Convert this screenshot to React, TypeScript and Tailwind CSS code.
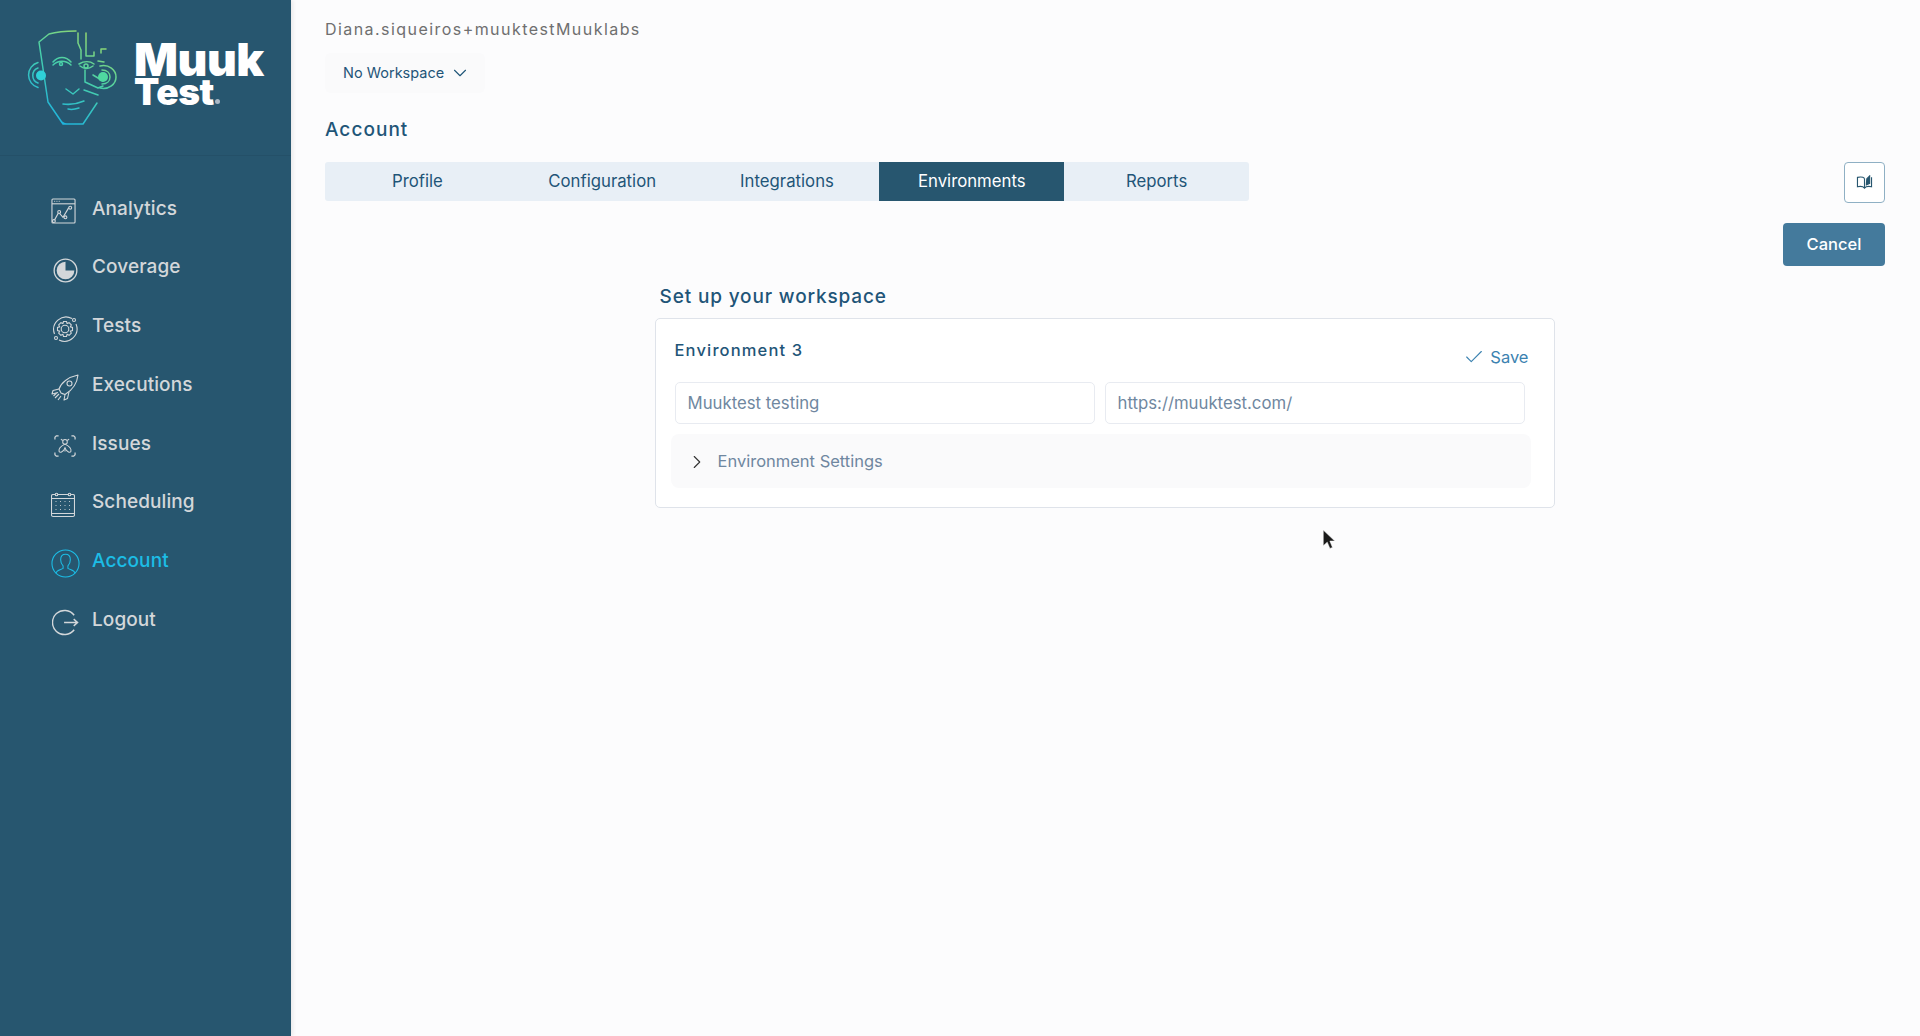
import { Check, ChevronDown, ChevronRight } from "lucide-react";
import type { ReactNode } from "react";

const AnalyticsIcon = () => (
  <svg viewBox="0 0 26 28" className="w-[25px] h-[27px]" fill="none" stroke="currentColor" strokeWidth="1.150">
    <rect x="1" y="1" width="24" height="25" rx="1" />
    <path d="M1 6h24" />
    <path d="M3.5 3.5h.8M5.8 3.5h.8M8.1 3.5h.8" />
    <path d="M3 24l5-9 4.5 5 6-10" />
    <circle cx="3" cy="24" r="1.5" fill="#27566f" />
    <circle cx="8.5" cy="14.5" r="1.5" fill="#27566f" />
    <circle cx="15" cy="20" r="1.5" fill="#27566f" />
    <circle cx="20" cy="10" r="1.5" fill="#27566f" />
  </svg>
);

const CoverageIcon = () => (
  <svg viewBox="0 0 26 26" className="w-[25px] h-[25px] ml-[2px]">
    <circle cx="13" cy="13" r="11.8" fill="none" stroke="currentColor" strokeWidth="1.4" />
    <path d="M13 3.8A9.2 9.2 0 1 0 22.2 13H13z" fill="currentColor" />
    <path d="M15 3.9A9 9 0 0 1 22 11h-7z" fill="#27566f" />
  </svg>
);

const TestsIcon = () => (
  <svg viewBox="0 0 28 28" className="w-[28px] h-[28px]" fill="none" stroke="currentColor" strokeWidth="1.100">
    <path d="M3.5 19A12.5 12.5 0 0 1 21 3.5" />
    <path d="M25 9A12.5 12.5 0 0 1 8 25" />
    <circle cx="23" cy="5" r="1.5" />
    <circle cx="5" cy="23" r="1.5" />
    <circle cx="14" cy="14" r="3.8" />
    <path d="M12.5 6.5h3l.6 2.1 2-.9 2.2 2.2-1 2 2.2.6v3l-2.2.6 1 2-2.2 2.2-2-1-.6 2.2h-3l-.6-2.2-2 1-2.2-2.2 1-2-2.2-.6v-3l2.2-.6-1-2 2.2-2.2 2 .9z" />
  </svg>
);

const ExecutionsIcon = () => (
  <svg viewBox="0 0 28 28" className="w-[28px] h-[28px]" fill="none" stroke="currentColor" strokeWidth="1.100" strokeLinejoin="round">
    <path d="M10 19c-1-2-1.500-3-2-4C10 9 17 3 27 1c-1 9-7 16-13 19.500-1.500-.5-3-1-4-1.500z" />
    <circle cx="18.500" cy="9.500" r="2.500" />
    <path d="M8 15l-6 1.500L1 20l6-1.500" />
    <path d="M14 20.500L13 26l3.500-1.500 1.500-6.500" />
    <path d="M8 20l-4 4M10 22l-3 4M5.500 19l-3 3" />
  </svg>
);

const IssuesIcon = () => (
  <svg viewBox="0 0 24 24" className="w-[22px] h-[22px] ml-[3px]" fill="none" stroke="currentColor" strokeWidth="1.100">
    <path d="M1 5V2.500L2.500 1H5M19 1h2.500L23 2.500V5M23 19v2.500L21.500 23H19M5 23H2.500L1 21.500V19" strokeWidth="1.300" />
    <circle cx="12" cy="7.500" r="2.500" />
    <path d="M9.500 6L7.500 4.500M14.500 6l2-1.500" />
    <path d="M12 10c-4 2-7 5-6.500 7.500S10 19 12 14c2 5 6 6 6.500 3.500S16 12 12 10z" />
    <path d="M12 14v4" />
  </svg>
);

const SchedulingIcon = () => {
  const dots = [9.5, 13.5, 17.5].flatMap((y) => [5, 9.500, 14, 18.500].map((x) => ({ x, y })));
  return (
    <svg viewBox="0 0 24 26" className="w-[24px] h-[26px]" fill="none" stroke="currentColor" strokeWidth="1.100">
      <rect x="0.500" y="2.500" width="23" height="22" rx="1.500" />
      <path d="M0.500 6.500h23M0.500 21.500h23" />
      <circle cx="5.500" cy="2.500" r="1.300" fill="#27566f" />
      <circle cx="18.500" cy="2.500" r="1.300" fill="#27566f" />
      {dots.map((d) => (
        <circle key={`${d.x}-${d.y}`} cx={d.x} cy={d.y} r="0.550" fill="currentColor" stroke="none" />
      ))}
    </svg>
  );
};

const AccountIcon = () => (
  <svg viewBox="0 0 30 30" className="w-[29px] h-[29px]" fill="none" stroke="currentColor" strokeWidth="1.100">
    <circle cx="15" cy="15" r="14" />
    <path d="M5 25c1-3.500 5-3.500 7.500-5v-2.500c-1.500-1.500-2.500-4-2.500-6.500 0-3.500 2-5.500 5-5.500s5 2 5 5.500c0 2.500-1 5-2.500 6.500V20c2.500 1.500 6.500 1.500 7.500 5" />
  </svg>
);

const LogoutIcon = () => (
  <svg viewBox="0 0 28 28" className="w-[27px] h-[27px] ml-[1px]" fill="none" stroke="currentColor" strokeWidth="1.500">
    <path d="M23 6.500A12.500 12.500 0 1 0 23 21.500" />
    <path d="M12.500 14h14M22.500 10.500L26.500 14l-4 3.500" />
  </svg>
);

const FaceLogo = () => (
  <svg viewBox="24 28 96 100" className="w-[96px] h-[100px]" fill="none" strokeWidth="1.500">
    <defs>
      <linearGradient id="face" gradientUnits="userSpaceOnUse" x1="100" y1="36" x2="50" y2="118">
        <stop offset="0" stopColor="#9ad86a" />
        <stop offset="0.450" stopColor="#49d0a8" />
        <stop offset="1" stopColor="#1fb4dd" />
      </linearGradient>
    </defs>
    <g stroke="url(#face)" strokeLinecap="round" strokeLinejoin="round">
      <path d="M75 31c-12 0-20 1-27 3l-10 8 9 60 15 22h20l14-21" />
      <path d="M77 33v10l3 7v9" />
      <path d="M85 33v23h8v-4" />
      <path d="M100 53v-4h5M97 61l6 1" />
      <path d="M52 62c5-6 13-6 18 0M52 65c5-5 13-5 18 0" />
      <path d="M78 64c5-3 11-3 15 0M79 66c4 3 9 3 13 0" />
      <circle cx="60" cy="64" r="1.500" />
      <circle cx="85" cy="66" r="2" />
      <path d="M84 70v12l13 6 5-2M92 75l10 6" />
      <path d="M83 90l14 5" />
      <path d="M65 89l7 5 6-5" />
      <path d="M62 104c7 1 14 0 21-3M67 109c4 1 8 0 11-1" />
      <path d="M37 62.500a13 13 0 0 0 0 25" />
      <path d="M37 68a8 8 0 0 0 0 15" />
      <path d="M99 66c9-2 16 4 16 11s-7 13-16 11" />
      <path d="M101 70c5 0 8 3 8 7s-3 7-8 7" />
    </g>
    <circle cx="40" cy="75.500" r="5" fill="#2fd0d8" />
    <circle cx="102" cy="77" r="5" fill="#4fd8a0" />
    <path d="M60 121l6 3h-4z" fill="#1fb4dd" />
  </svg>
);

const navItems: { label: string; icon: ReactNode; active?: boolean }[] = [
  { label: "Analytics", icon: <AnalyticsIcon /> },
  { label: "Coverage", icon: <CoverageIcon /> },
  { label: "Tests", icon: <TestsIcon /> },
  { label: "Executions", icon: <ExecutionsIcon /> },
  { label: "Issues", icon: <IssuesIcon /> },
  { label: "Scheduling", icon: <SchedulingIcon /> },
  { label: "Account", icon: <AccountIcon />, active: true },
  { label: "Logout", icon: <LogoutIcon /> },
];

const tabs = ["Profile", "Configuration", "Integrations", "Environments", "Reports"];

const Sidebar = () => (
  <aside className="w-[291px] shrink-0 bg-[#27566f] shadow-[2px_0_4px_rgba(0,0,0,0.08)]">
    <div className="h-[156px] flex items-start pl-[25px] pt-[28px] border-b border-[#245068]">
      <FaceLogo />
      <div className="ml-[13px] mt-[13px] text-white font-black font-['Inter',sans-serif] leading-none">
        <div className="text-[46px] tracking-[-0.01em] leading-[36px]">Muuk</div>
        <div className="flex items-end text-[37px] tracking-[-0.01em] leading-[30px]">
          Test
          <span className="w-[5px] h-[5px] rounded-full bg-[#a9b8c6] mb-[3px] ml-[1px]"></span>
        </div>
      </div>
    </div>
    <nav className="pt-[23px]">
      {navItems.map((item) => (
        <div
          key={item.label}
          className={`h-[58.75px] flex items-center pl-[51px] ${item.active ? "text-[#1cbde6]" : "text-[#d3d7da]"}`}
        >
          <div className="w-[41px] mt-[6px] flex items-center">{item.icon}</div>
          <span className="text-[19px] font-medium tracking-[0.005em] mt-[1px]">{item.label}</span>
        </div>
      ))}
    </nav>
  </aside>
);

const App = () => {
  return (
    <div className="relative flex min-h-[1036px] bg-[#fcfcfd] font-['Inter',sans-serif]">
      <Sidebar />
      <main className="flex-1 pl-[34px] pr-[35px] pt-[18px]">
        <div className="text-[16px] leading-[22px] tracking-[0.09em] text-[#6f6f6f]">Diana.siqueiros+muuktestMuuklabs</div>
        <button className="mt-[13px] w-[160px] h-[40px] flex items-center pl-[18px] rounded-[6px] bg-[#fafafb] text-[#1f5578] text-[14.500px]">
          No Workspace
          <ChevronDown className="w-[22px] h-[22px] ml-[5px]" strokeWidth={1.200} />
        </button>
        <h1 className="mt-[23px] text-[19px] leading-[28px] tracking-[0.055em] font-medium text-[#1f5578]">Account</h1>
        <div className="mt-[18px] flex items-start justify-between">
          <div className="w-[924px] h-[39px] grid grid-cols-5 rounded-[3px] bg-[#e8eff6] overflow-hidden">
            {tabs.map((tab) => (
              <div
                key={tab}
                className={`flex items-center justify-center pt-[1px] text-[16.750px] ${tab === "Environments" ? "bg-[#27566f] text-white" : "text-[#1f5578]"}`}
              >
                {tab}
              </div>
            ))}
          </div>
          <button className="w-[41px] h-[41px] flex items-center justify-center rounded-[4px] border border-[#8fb0c4] bg-white">
            <svg viewBox="0 0 18 16" className="w-[17px] h-[15px]" fill="none" stroke="#27566f" strokeWidth="1.200">
              <path d="M9 3.500C7.500 2 4 2 1.500 2.500v10C4 12 7.500 12 9 14c1.500-2 5-2 7.500-1.500v-10" />
              <path d="M9 3.500V14" />
              <path d="M11 9.500L11.500 4 14.500 1v8l-3.500 1.500z" fill="#27566f" />
            </svg>
          </button>
        </div>
        <div className="mt-[20px] flex justify-end">
          <button className="w-[102px] h-[43px] rounded-[4px] bg-[#447a9c] text-white text-[16.500px] font-medium">Cancel</button>
        </div>
        <div className="flex justify-center">
          <div className="w-[900px] mt-[19px] mr-[1px]">
            <h2 className="pl-[5px] text-[19px] leading-[24px] tracking-[0.045em] font-medium text-[#1f5578]">Set up your workspace</h2>
            <section className="mt-[9px] h-[190px] rounded-[5px] border border-[#dfe3ea] bg-white pl-[19px] pr-[19px]">
              <div className="h-[63px] flex items-start justify-between">
                <h3 className="mt-[20px] text-[16.500px] leading-[22px] tracking-[0.07em] font-medium text-[#1f5578]">Environment 3</h3>
                <div className="mt-[27px] mr-[6px] flex items-center gap-[5px] text-[#3b82b0] text-[16.500px] leading-[22px]">
                  <Check className="w-[22px] h-[22px]" strokeWidth={1.200} />
                  Save
                </div>
              </div>
              <div className="flex gap-[10px] pr-[10px]">
                {["Muuktest testing", "https://muuktest.com/"].map((value) => (
                  <div
                    key={value}
                    className="flex-1 h-[42px] flex items-center pl-[12px] pt-[1px] rounded-[5px] border border-[#e8ebf1] text-[16.750px] text-[#6f87a0]"
                  >
                    {value}
                  </div>
                ))}
              </div>
              <div className="mt-[10px] -ml-[4px] mr-[4px] h-[54px] flex items-center pl-[15px] pt-[1px] rounded-[8px] bg-[#fafafb] text-[16.500px] text-[#6f87a0]">
                <ChevronRight className="w-[22px] h-[22px] text-[#333] mr-[10px]" strokeWidth={1.200} />
                Environment Settings
              </div>
            </section>
          </div>
        </div>
      </main>
      <svg viewBox="0 0 12 20" className="absolute left-[1322px] top-[529px] w-[13px] h-[21px]">
        <path d="M1 1v15l3.800-3.500 2.500 6 2.500-1-2.500-6H12z" fill="#1a1a1a" stroke="#fff" strokeWidth="0.500" />
      </svg>
    </div>
  );
};

export default App;
